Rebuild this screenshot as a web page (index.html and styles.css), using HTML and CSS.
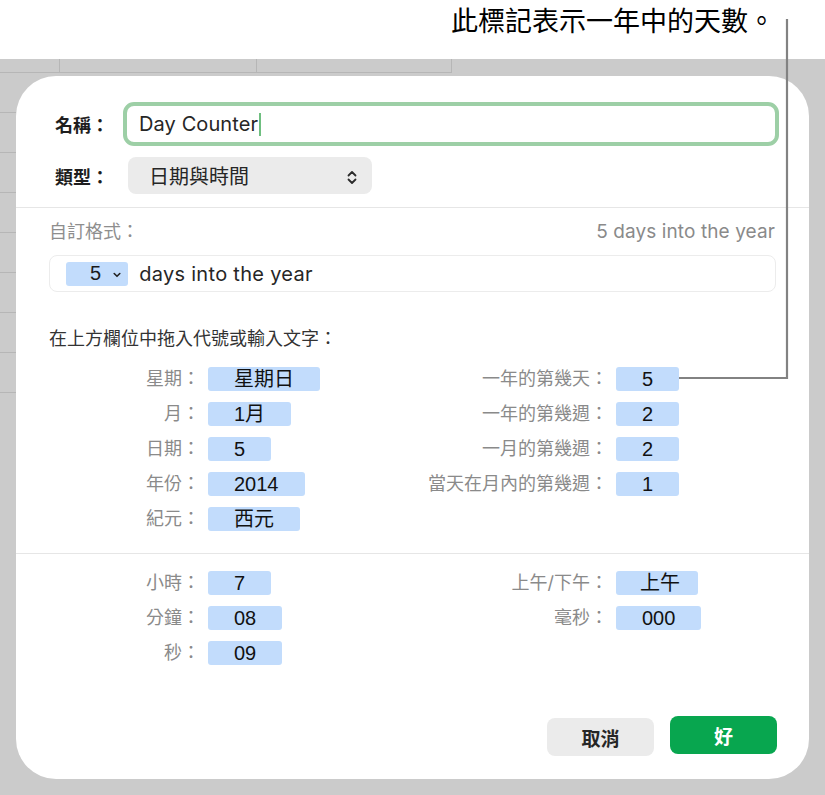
FILE: index.html
```html
<!DOCTYPE html>
<html lang="zh-Hant">
<head>
    <meta charset="UTF-8">
    <meta name="viewport" content="width=device-width, initial-scale=1.0">
    <title>自訂格式</title>
    <link rel="stylesheet" href="styles.css">
</head>
<body>
    <div class="callout"><span>此標記表示一年中的天數。</span></div>

    <div class="workspace">
        <div class="dialog">
            <div class="head">
                <div class="row">
                    <label class="row-label">名稱：</label>
                    <div class="name-field">Day Counter<span class="caret"></span></div>
                </div>
                <div class="row">
                    <label class="row-label">類型：</label>
                    <div class="select">
                        <span>日期與時間</span>
                        <svg width="10" height="15" viewBox="0 0 10 15"><path d="M1.5 5.5 L5 2 L8.5 5.5 M1.5 9.5 L5 13 L8.5 9.5" fill="none" stroke="#2b2b2b" stroke-width="1.8" stroke-linecap="round" stroke-linejoin="round"/></svg>
                    </div>
                </div>
            </div>

            <div class="format">
                <div class="format-top">
                    <span class="muted">自訂格式：</span>
                    <span class="preview">5 days into the year</span>
                </div>
                <div class="format-field">
                    <span class="chip">5<svg width="8" height="6" viewBox="0 0 8 6"><path d="M1.2 1.5 L4 4.3 L6.8 1.5" fill="none" stroke="#222" stroke-width="1.6" stroke-linecap="round" stroke-linejoin="round"/></svg></span>
                    <span class="format-text">days into the year</span>
                </div>
                <p class="hint">在上方欄位中拖入代號或輸入文字：</p>

                <div class="tokens">
                    <span class="tlabel">星期：</span><span class="token">星期日</span>
                    <span class="tlabel">一年的第幾天：</span><span class="token">5</span>
                    <span class="tlabel">月：</span><span class="token">1月</span>
                    <span class="tlabel">一年的第幾週：</span><span class="token">2</span>
                    <span class="tlabel">日期：</span><span class="token">5</span>
                    <span class="tlabel">一月的第幾週：</span><span class="token">2</span>
                    <span class="tlabel">年份：</span><span class="token">2014</span>
                    <span class="tlabel">當天在月內的第幾週：</span><span class="token">1</span>
                    <span class="tlabel">紀元：</span><span class="token">西元</span>
                </div>
            </div>

            <div class="time">
                <div class="tokens">
                    <span class="tlabel">小時：</span><span class="token">7</span>
                    <span class="tlabel">上午/下午：</span><span class="token narrow">上午</span>
                    <span class="tlabel">分鐘：</span><span class="token">08</span>
                    <span class="tlabel">毫秒：</span><span class="token">000</span>
                    <span class="tlabel">秒：</span><span class="token">09</span>
                </div>
                <div class="actions">
                    <button class="btn cancel">取消</button>
                    <button class="btn ok">好</button>
                </div>
            </div>
        </div>
    </div>

    <!-- leader line from the callout to the day-of-year token -->
    <svg class="leader" width="825" height="795" viewBox="0 0 825 795">
        <polyline points="787,19 787,378 679,378" fill="none" stroke="#828282" stroke-width="2.2"/>
    </svg>
</body>
</html>
```

FILE: styles.css
```css
:root {
    --sheet-bg: #cbcbcb;
    --sheet-line: #b6b6b6;
    --label-gray: #8a8a8a;
    --text-color: #222222;
    --token-bg: #c2dcfc;
    --divider: #e6e6e6;
    --green: #08a64f;
}
body {
    margin: 0;
    width: 825px;
    height: 795px;
    overflow: hidden;
    position: relative;
    font-family: Inter, "Noto Sans CJK TC", sans-serif;
    color: var(--text-color);
    background-color: #ffffff;
}
.callout {
    height: 59px;
    display: flex;
    justify-content: flex-end;
    padding-right: 50px;
    font-family: "Noto Sans CJK TC", sans-serif;
    font-size: 27px;
    line-height: 40px;
    color: #000000;
}
.workspace {
    height: 736px;
    box-sizing: border-box;
    padding: 17px 16px 16px 16px;
    background:
        linear-gradient(var(--sheet-line), var(--sheet-line)) 0 13px / 452px 1px no-repeat,
        linear-gradient(var(--sheet-line), var(--sheet-line)) 59px 0 / 1px 14px no-repeat,
        linear-gradient(var(--sheet-line), var(--sheet-line)) 256px 0 / 1px 14px no-repeat,
        linear-gradient(var(--sheet-line), var(--sheet-line)) 451px 0 / 1px 14px no-repeat,
        repeating-linear-gradient(transparent 0 39px, var(--sheet-line) 39px 40px) 0 14px / 16px 320px no-repeat,
        var(--sheet-bg);
}
.dialog {
    width: 793px;
    height: 703px;
    box-sizing: border-box;
    background-color: #ffffff;
    border-radius: 40px;
}
.head {
    padding: 26px 30px 13px 39px;
    border-bottom: 1px solid var(--divider);
}
.row {
    display: flex;
    align-items: center;
}
.row + .row {
    margin-top: 11px;
}
.row-label {
    width: 68px;
    flex-shrink: 0;
    font-size: 18px;
    font-weight: bold;
    color: #1e1e1e;
}
.name-field {
    flex: 1;
    height: 44px;
    box-sizing: border-box;
    display: flex;
    align-items: center;
    padding-left: 12px;
    border: 4px solid #9dcfa6;
    border-radius: 11px;
    font-size: 20px;
    letter-spacing: 0.1px;
    color: #262626;
}
.caret {
    display: inline-block;
    width: 2px;
    height: 23px;
    margin-left: 1px;
    background-color: #6fbf80;
}
.select {
    width: 244px;
    height: 37px;
    margin-left: 5px;
    box-sizing: border-box;
    display: flex;
    align-items: center;
    justify-content: space-between;
    padding: 0 15px 0 21px;
    background-color: #ebebeb;
    border-radius: 8px;
    font-size: 20px;
    color: #262626;
}
.select svg {
    margin-top: 3px;
}
.format {
    padding: 13px 33px 22px 33px;
    border-bottom: 1px solid var(--divider);
}
.format-top {
    display: flex;
    justify-content: space-between;
    line-height: 22px;
    font-size: 18px;
}
.muted {
    color: #8e8e8e;
}
.preview {
    color: #8a8a8a;
    font-size: 19px;
    letter-spacing: 0.1px;
    margin-right: 1px;
}
.format-field {
    margin-top: 12px;
    height: 37px;
    box-sizing: border-box;
    display: flex;
    align-items: center;
    gap: 11px;
    padding-left: 16px;
    border: 1px solid #ececec;
    border-radius: 8px;
    color: #262626;
}
.format-text {
    font-size: 20px;
    letter-spacing: 0.3px;
}
.chip {
    height: 24px;
    display: inline-flex;
    align-items: center;
    gap: 12px;
    padding: 0 7px 0 24px;
    background-color: var(--token-bg);
    border-radius: 3px;
    font-family: "Liberation Sans", sans-serif;
    font-size: 20px;
    color: #1a1a1a;
}
.chip svg {
    margin-top: 2px;
}
.hint {
    margin: 36px 0 17px 0;
    font-size: 18px;
    line-height: 22px;
    color: #333333;
}
.tokens {
    display: grid;
    grid-template-columns: 151px 171px 221px auto;
    grid-auto-rows: 24px;
    row-gap: 11px;
    column-gap: 8px;
}
.tlabel {
    text-align: right;
    line-height: 24px;
    font-size: 18px;
    color: var(--label-gray);
    white-space: nowrap;
}
.token {
    justify-self: start;
    padding: 0 26px;
    line-height: 24px;
    background-color: var(--token-bg);
    border-radius: 3px;
    font-family: "Liberation Sans", "Noto Sans CJK TC", sans-serif;
    font-size: 20px;
    color: #111111;
    text-align: center;
}
.token.narrow {
    padding: 0 18px 0 24px;
}
.time {
    padding: 17px 32px 0 33px;
}
.actions {
    display: flex;
    justify-content: flex-end;
    gap: 16px;
    margin-top: 51px;
}
.btn {
    width: 107px;
    height: 38px;
    border: none;
    border-radius: 8px;
    font-family: "Noto Sans CJK TC", sans-serif;
    font-size: 19px;
    font-weight: bold;
    cursor: pointer;
}
.cancel {
    background-color: #ebebeb;
    color: #262626;
    margin-top: 2px;
}
.ok {
    background-color: var(--green);
    color: #ffffff;
}
.leader {
    position: absolute;
    top: 0;
    left: 0;
    pointer-events: none;
}
```
